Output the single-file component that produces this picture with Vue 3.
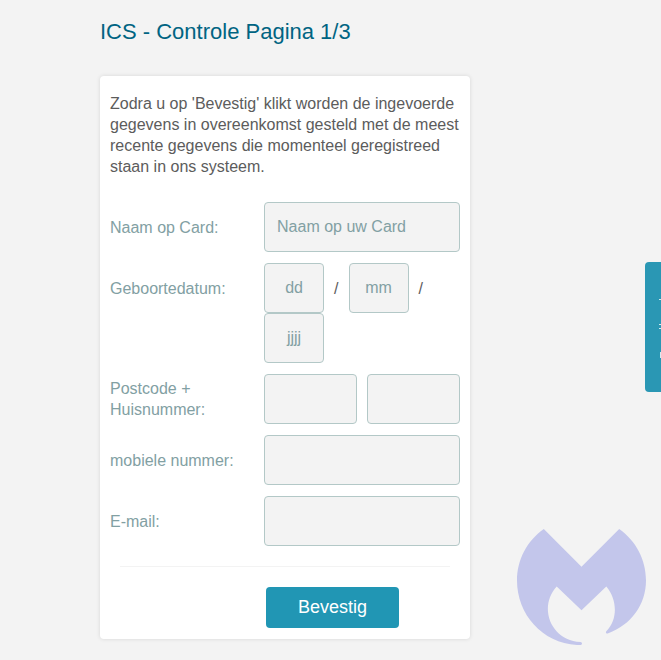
<script setup>
import { ref } from "vue";

const naam = ref("");
const dag = ref("");
const maand = ref("");
const jaar = ref("");
const postcode = ref("");
const huisnummer = ref("");
const mobiel = ref("");
const email = ref("");
</script>

<template>
  <main class="page">
    <div class="content">
      <h1>ICS - Controle Pagina 1/3</h1>

      <form class="card" @submit.prevent>
        <p class="intro">
          Zodra u op 'Bevestig' klikt worden de ingevoerde gegevens in
          overeenkomst gesteld met de meest recente gegevens die momenteel
          geregistreed staan in ons systeem.
        </p>

        <div class="row">
          <label for="naam">Naam op Card:</label>
          <div class="fields">
            <input id="naam" v-model="naam" type="text" placeholder="Naam op uw Card" />
          </div>
        </div>

        <div class="row">
          <label for="dag">Geboortedatum:</label>
          <div class="fields date">
            <input id="dag" v-model="dag" type="text" maxlength="2" placeholder="dd" />
            <span>/</span>
            <input v-model="maand" type="text" maxlength="2" placeholder="mm" aria-label="Maand" />
            <span>/</span>
            <input v-model="jaar" type="text" maxlength="4" placeholder="jjjj" aria-label="Jaar" />
          </div>
        </div>

        <div class="row">
          <label for="postcode">Postcode + Huisnummer:</label>
          <div class="fields">
            <input id="postcode" v-model="postcode" type="text" />
            <input v-model="huisnummer" type="text" aria-label="Huisnummer" />
          </div>
        </div>

        <div class="row">
          <label for="mobiel">mobiele nummer:</label>
          <div class="fields">
            <input id="mobiel" v-model="mobiel" type="tel" />
          </div>
        </div>

        <div class="row">
          <label for="email">E-mail:</label>
          <div class="fields">
            <input id="email" v-model="email" type="email" />
          </div>
        </div>

        <hr />

        <div class="actions">
          <button type="submit">Bevestig</button>
        </div>
      </form>
    </div>

    <button class="side-tab" type="button" aria-label="Zijpaneel">
      <svg width="2" height="62" viewBox="0 0 2 62" aria-hidden="true">
        <path d="M0 3.5h2M0 28.5h2M0 32.5h2M1.5 56v6" />
      </svg>
    </button>

    <svg class="logo" viewBox="0 0 130 117" aria-hidden="true">
      <path
        d="M27 0L65 38L103 0C120 12 130 31 130 52C130 76 115 97 92 105C90 106 89 104 90 103C102 91 101 71 90 58L65 82L40 58C21 79 34 112 64 114C66 114 66 117 64 117C27 117 0 87 0 52C0 31 10 12 27 0Z"
      />
    </svg>
  </main>
</template>

<style>
body {
  margin: 0;
  background-color: #f3f3f3;
}
</style>

<style scoped>
.page {
  min-height: 100vh;
  font-family: "Liberation Sans", Arial, sans-serif;
  font-size: 16px;
  line-height: 21px;
  color: #5c5c5c;
}

.content {
  width: 56%;
  min-width: 300px;
  max-width: 560px;
  margin-left: 100px;
  padding: 16px 0 20px;
}

h1 {
  margin: 0 0 28px;
  font-size: 22px;
  font-weight: 400;
  line-height: 32px;
  color: #006482;
}

.card {
  box-sizing: border-box;
  padding: 17px 10px 11px;
  background-color: #fff;
  border-radius: 4px;
  box-shadow: 0 0 4px rgba(0, 0, 0, 0.12);
}

.intro {
  margin: 0 0 25px;
}

.row {
  display: grid;
  grid-template-columns: 44% minmax(0, 1fr);
  margin-bottom: 11px;
}

.row label {
  display: flex;
  align-items: center;
  height: 50px;
  padding-right: 10px;
  color: #82a0a3;
}

.fields {
  display: flex;
  gap: 10px;
}

input {
  box-sizing: border-box;
  flex: 1;
  min-width: 0;
  height: 50px;
  padding: 0 12px;
  border: 1px solid #b3c8c7;
  border-radius: 4px;
  background-color: #f3f3f3;
  font: inherit;
  color: #5c5c5c;
}

input::placeholder {
  color: #82a0a3;
  opacity: 1;
}

.date {
  flex-wrap: wrap;
  align-items: center;
  row-gap: 0;
}

.date input {
  flex: 0 0 60px;
  text-align: center;
}

hr {
  height: 1px;
  margin: 20px 10px;
  border: 0;
  background-color: #f3f3f3;
}

.actions {
  padding-left: 156px;
}

.actions button {
  width: 133px;
  height: 41px;
  border: 0;
  border-radius: 4px;
  background-color: #2196b4;
  font-family: inherit;
  font-size: 18px;
  color: #fff;
  cursor: pointer;
}

.side-tab {
  position: fixed;
  top: 262px;
  right: 0;
  display: flex;
  align-items: center;
  justify-content: flex-end;
  width: 16px;
  height: 130px;
  padding: 0;
  border: 0;
  border-radius: 4px 0 0 4px;
  background-color: #2a97b4;
  cursor: pointer;
}

.side-tab path {
  fill: none;
  stroke: #d4eaf0;
}

.logo {
  position: fixed;
  right: 15px;
  bottom: 15px;
  width: 129px;
  fill: #c3c6eb;
}
</style>
